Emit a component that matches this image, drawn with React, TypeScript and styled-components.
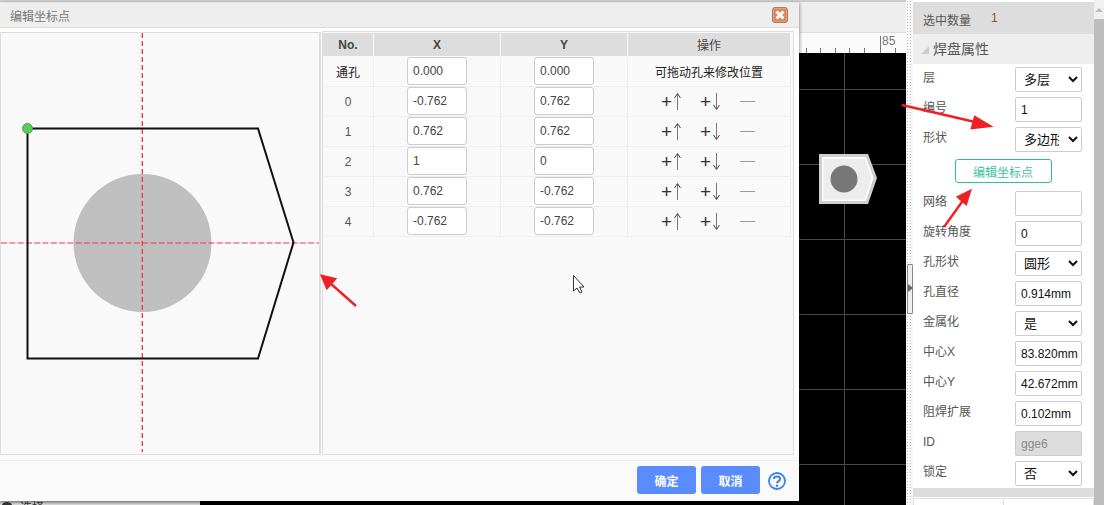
import { FC } from 'react'
import styled, { createGlobalStyle } from 'styled-components'

const GlobalStyle = createGlobalStyle`
  html, body { margin: 0; padding: 0; background: #fff; }
  body { font-family: "Liberation Sans", "Noto Sans CJK SC", sans-serif; overflow: hidden; }
  * { box-sizing: border-box; }
`

const Page = styled.div`
  position: relative;
  width: 1104px;
  height: 505px;
  display: flex;
  overflow: hidden;
  background: #fff;
`

/* editor behind the dialog */
const Editor = styled.div`
  width: 906px;
  display: flex;
  flex-direction: column;
`

const TabBar = styled.div`
  height: 33px;
  flex: none;
  background: #eee;
  border-top: 2px solid #ccc;
  border-bottom: 1px solid #ddd;
`

const Ruler = styled.div`
  height: 20px;
  flex: none;
  background: #fafafa;
  position: relative;
  color: #777;
  font-size: 12px;
`

const RulerLabel = styled.span`
  position: absolute;
  left: 882px;
  top: 1px;
`

const RulerTicks = styled.svg`
  position: absolute;
  left: 800px;
  top: 0;
`

const Board = styled.div`
  flex: 1;
  position: relative;
  background-color: #000;
  background-image:
    linear-gradient(#484848, #484848),
    repeating-linear-gradient(to bottom, transparent 0 36px, #484848 36px 37px, transparent 37px 75px);
  background-size: 1px 100%, 100% 100%;
  background-position: 844px 0, 0 0;
  background-repeat: no-repeat;
`

const PadDrawing = styled.svg`
  position: absolute;
  left: 816px;
  top: 100px;
`

const Splitter = styled.div`
  position: relative;
  width: 7px;
  flex: none;
  background-image: radial-gradient(#bbb 0.7px, transparent 0.8px);
  background-size: 3px 3px;
  background-color: #f8f8f8;
`

const SplitterHandle = styled.div`
  position: absolute;
  left: 1px;
  top: 264px;
  width: 6px;
  height: 50px;
  background: #eee;
  border: 1px solid #888;
  border-radius: 1px;
  &::after {
    content: '';
    position: absolute;
    top: 19px;
    left: 0;
    border-left: 5px solid #666;
    border-top: 4px solid transparent;
    border-bottom: 4px solid transparent;
  }
`

/* properties panel */
const Props = styled.aside`
  width: 181px;
  flex: none;
  padding-top: 2px;
  color: #555;
  font-size: 12px;
  display: flex;
  flex-direction: column;
`

const CountBar = styled.div`
  height: 32px;
  flex: none;
  background: #ddd;
  padding: 9px 0 0 10px;
  display: flex;
  gap: 20px;
  font-size: 12px;
`

const CountValue = styled.span`
  color: #7a5a20;
`

const SectionHead = styled.div`
  height: 30px;
  flex: none;
  background: #eee;
  font-size: 14px;
  line-height: 30px;
  display: flex;
  align-items: center;
  padding-left: 8px;
  gap: 4px;
`

const Caret = styled.span`
  width: 0;
  height: 0;
  margin-top: 2px;
  border-left: 8px solid transparent;
  border-bottom: 8px solid #ccc;
`

const Fields = styled.div`
  padding: 3px 12px 0 10px;
  display: flex;
  flex-direction: column;
  gap: 5px;
`

const Field = styled.label`
  height: 25px;
  display: flex;
  justify-content: space-between;
  align-items: flex-start;
`

const FieldName = styled.span`
  line-height: 23px;
`

const FieldInput = styled.input<{ $off?: boolean }>`
  width: 67px;
  height: 25px;
  border: 1px solid #ccc;
  border-radius: 2px;
  padding: 1px 0 0 5px;
  font: 12px "Liberation Sans", "Noto Sans CJK SC", sans-serif;
  color: ${p => (p.$off ? '#888' : '#111')};
  background: ${p => (p.$off ? '#ddd' : '#fff')};
  outline: none;
`

const FieldSelect = styled.select`
  width: 67px;
  height: 25px;
  border: 1px solid #ccc;
  border-radius: 2px;
  padding: 0 6px 0 4px;
  background: #fff;
  color: #111;
  font: 13px "Liberation Sans", "Noto Sans CJK SC", sans-serif;
`

const OutlineButton = styled.button`
  align-self: center;
  width: 97px;
  height: 24px;
  margin: 2px 0 3px 1px;
  padding: 0;
  background: #fff;
  border: 1px solid #2fbf9b;
  border-radius: 3px;
  color: #3cc2a0;
  font: 12px "Liberation Sans", "Noto Sans CJK SC", sans-serif;
`

const PropsFoot = styled.div`
  margin-top: 2px;
  height: 9px;
  flex: none;
  background: #ddd;
`

const FootCells = styled.div`
  flex: 1;
  margin-top: 1px;
  border-left: 1px solid #ddd;
  border-top: 1px solid #ddd;
  display: grid;
  grid-template-columns: 90px 1fr;
`

const FootCell = styled.div`
  border-right: 1px solid #ddd;
`

const ScrollBar = styled.div`
  width: 10px;
  flex: none;
  position: relative;
  background: #f1f1f1;
  padding-top: 19px;
  &::before {
    content: '';
    position: absolute;
    top: 8px;
    left: 1px;
    border-left: 4px solid transparent;
    border-right: 4px solid transparent;
    border-bottom: 4px solid #bbb;
  }
`

const ScrollThumb = styled.div`
  height: 100%;
  background: #bdbdbd;
`

/* floating dialog */
const Dialog = styled.section`
  position: absolute;
  left: 0;
  top: 2px;
  width: 799px;
  height: 499px;
  background: #fafafa;
  box-shadow: 1px 1px 3px rgba(0, 0, 0, 0.35);
  display: flex;
  flex-direction: column;
`

const DialogTitle = styled.header`
  height: 26px;
  flex: none;
  background: #eee;
  border-top: 1px solid #e4e4e4;
  border-bottom: 1px solid #ddd;
  color: #777;
  font-size: 12px;
  padding: 0 11px 0 10px;
  display: flex;
  align-items: center;
  justify-content: space-between;
`

const CloseButton = styled.span`
  width: 16px;
  height: 16px;
  border-radius: 3px;
  background: #dd8762;
  border: 1px solid #b9745a;
  box-shadow: inset 0 0 0 1px rgba(255, 255, 255, 0.2);
  display: flex;
  align-items: center;
  justify-content: center;
`

const DialogBody = styled.div`
  height: 427px;
  flex: none;
  padding-top: 3px;
  display: flex;
  background: #fff;
`

const Preview = styled.div`
  width: 321px;
  margin-top: 1px;
  flex: none;
  background: #f9f9f9;
  border: 1px solid #ddd;
  border-right: 2px solid #ddd;
`

const PointsPanel = styled.div`
  width: 472px;
  margin-left: 1px;
  background: #f9f9f9;
  border: 1px solid #ddd;
  padding: 1px 1px 1px 0;
`

const PointsGrid = styled.div`
  display: grid;
  grid-template-columns: 51px 127px 127px 163px;
  grid-auto-rows: 30px;
  grid-template-rows: 24px;
`

const HeadCell = styled.div<{ $plain?: boolean }>`
  background: #ddd;
  border-right: 1px solid #f9f9f9;
  border-bottom: 1px solid #f9f9f9;
  color: #444;
  font-size: 12px;
  font-weight: ${p => (p.$plain ? 'normal' : 'bold')};
  display: flex;
  align-items: center;
  justify-content: center;
`

const Cell = styled.div<{ $strong?: boolean }>`
  border-right: 1px solid #eee;
  border-bottom: 1px solid #eee;
  color: ${p => (p.$strong ? '#222' : '#555')};
  font-size: 12px;
  display: flex;
  align-items: center;
  justify-content: center;
`

const PointInput = styled.input`
  width: 60px;
  height: 28px;
  margin-top: -1px;
  border: 1px solid #ccc;
  border-radius: 3px;
  padding: 0 5px;
  background: #fff;
  color: #444;
  font: 12px "Liberation Sans", sans-serif;
  outline: none;
`

const Actions = styled.div`
  width: 100%;
  padding-left: 33px;
  display: flex;
  align-items: center;
`

const ActionButton = styled.span`
  width: 39px;
  display: flex;
  align-items: center;
  gap: 2px;
  color: #333;
  font: 19px/20px "Liberation Sans", sans-serif;
`

const ActionArrow = styled.svg`
  flex: none;
`

const RemoveButton = styled.span`
  margin: -4px 0 0 1px;
  color: #999;
  font: 15px/20px "Liberation Sans", sans-serif;
`

const DialogFoot = styled.footer`
  flex: 1;
  margin-top: 5px;
  border-top: 1px solid #eee;
  padding: 5px 13px 0 0;
  display: flex;
  justify-content: flex-end;
  align-items: flex-start;
  gap: 5px;
`

const PrimaryButton = styled.button`
  width: 59px;
  height: 28px;
  padding: 0;
  border: none;
  border-radius: 3px;
  background: #5a8cff;
  color: #fff;
  font: bold 12px "Liberation Sans", "Noto Sans CJK SC", sans-serif;
`

const HelpIcon = styled.svg`
  margin: 6px 0 0 3px;
`

const UnderBar = styled.div`
  position: absolute;
  left: 0;
  top: 501px;
  width: 200px;
  height: 4px;
  background: linear-gradient(#aaa, #ddd);
  overflow: hidden;
  color: #333;
  font-size: 12px;
  line-height: 14px;
  padding-left: 20px;
`

const UnderIcon = styled.svg`
  position: absolute;
  left: 1px;
  top: 0;
`

const Overlay = styled.svg`
  position: absolute;
  left: 0;
  top: 0;
  pointer-events: none;
`

interface IPoint {
  no: string
  x: string
  y: string
}

const points: IPoint[] = [
  { no: '0', x: '-0.762', y: '0.762' },
  { no: '1', x: '0.762', y: '0.762' },
  { no: '2', x: '1', y: '0' },
  { no: '3', x: '0.762', y: '-0.762' },
  { no: '4', x: '-0.762', y: '-0.762' }
]

const UpArrow: FC = () => (
  <ActionArrow width="7" height="17" viewBox="0 0 7 17">
    <path d="M3.5 1V17" stroke="#777" fill="none" />
    <path d="M0.5 5L3.5 0.5L6.5 5" stroke="#444" fill="none" />
  </ActionArrow>
)

const DownArrow: FC = () => (
  <ActionArrow width="7" height="17" viewBox="0 0 7 17">
    <path d="M3.5 0V16" stroke="#777" fill="none" />
    <path d="M0.5 12L3.5 16.5L6.5 12" stroke="#444" fill="none" />
  </ActionArrow>
)

const PointRow: FC<IPoint> = ({ no, x, y }) => (
  <>
    <Cell>{no}</Cell>
    <Cell>
      <PointInput value={x} readOnly />
    </Cell>
    <Cell>
      <PointInput value={y} readOnly />
    </Cell>
    <Cell>
      <Actions>
        <ActionButton>
          +<UpArrow />
        </ActionButton>
        <ActionButton>
          +<DownArrow />
        </ActionButton>
        <RemoveButton>—</RemoveButton>
      </Actions>
    </Cell>
  </>
)

const InputField: FC<{ name: string; value: string; off?: boolean }> = ({ name, value, off }) => (
  <Field>
    <FieldName>{name}</FieldName>
    <FieldInput value={value} readOnly $off={off} />
  </Field>
)

const SelectField: FC<{ name: string; value: string }> = ({ name, value }) => (
  <Field>
    <FieldName>{name}</FieldName>
    <FieldSelect value={value} onChange={() => undefined}>
      <option>{value}</option>
    </FieldSelect>
  </Field>
)

const App: FC = () => {
  return (
    <Page>
      <GlobalStyle />
      <Editor>
        <TabBar />
        <Ruler>
          <RulerTicks width="106" height="20" viewBox="0 0 106 20">
            <path
              d="M6.5 15V20M20.5 15V20M35.5 15V20M49.5 15V20M64.5 15V20M80.5 3V20M95.5 15V20"
              stroke="#777"
              fill="none"
            />
          </RulerTicks>
          <RulerLabel>85</RulerLabel>
        </Ruler>
        <Board>
          <PadDrawing width="64" height="56" viewBox="0 0 64 56">
            <polygon points="3,1 52,1 61,25 52,51 3,51" fill="#cfcfcf" />
            <polygon points="6,4 50,4 57.5,25 50,48 6,48" fill="#fff" />
            <polygon points="7.5,5.5 49,5.5 55.5,25 49,46.5 7.5,46.5" fill="#ececec" />
            <circle cx="28" cy="26" r="13.5" fill="#777" />
          </PadDrawing>
        </Board>
      </Editor>
      <Splitter>
        <SplitterHandle />
      </Splitter>
      <Props>
        <CountBar>
          <span>选中数量</span>
          <CountValue>1</CountValue>
        </CountBar>
        <SectionHead>
          <Caret />
          焊盘属性
        </SectionHead>
        <Fields>
          <SelectField name="层" value="多层" />
          <InputField name="编号" value="1" />
          <SelectField name="形状" value="多边形" />
          <OutlineButton>编辑坐标点</OutlineButton>
          <InputField name="网络" value="" />
          <InputField name="旋转角度" value="0" />
          <SelectField name="孔形状" value="圆形" />
          <InputField name="孔直径" value="0.914mm" />
          <SelectField name="金属化" value="是" />
          <InputField name="中心X" value="83.820mm" />
          <InputField name="中心Y" value="42.672mm" />
          <InputField name="阻焊扩展" value="0.102mm" />
          <InputField name="ID" value="gge6" off />
          <SelectField name="锁定" value="否" />
        </Fields>
        <PropsFoot />
        <FootCells>
          <FootCell />
          <FootCell />
        </FootCells>
      </Props>
      <ScrollBar>
        <ScrollThumb />
      </ScrollBar>

      <UnderBar>
        <UnderIcon width="12" height="4" viewBox="0 0 12 4">
          <ellipse cx="6" cy="4" rx="5" ry="3" fill="#333" />
        </UnderIcon>
        选择
      </UnderBar>

      <Dialog>
        <DialogTitle>
          <span>编辑坐标点</span>
          <CloseButton>
            <svg width="10" height="10" viewBox="0 0 10 10">
              <path d="M1.5 1.5L8.5 8.5M8.5 1.5L1.5 8.5" stroke="#fff" strokeWidth="3" />
            </svg>
          </CloseButton>
        </DialogTitle>
        <DialogBody>
          <Preview>
            <svg width="318" height="419" viewBox="0 0 318 419">
              <circle cx="141.5" cy="210" r="69" fill="#bfbfbf" />
              <path d="M141.3 0V419" stroke="#ff3040" strokeWidth="1.3" strokeDasharray="5 3" fill="none" />
              <path d="M0 210H318" stroke="#ff3040" strokeDasharray="6 2.3" fill="none" />
              <polygon
                points="26.5,95.5 257,95.5 292.5,209.5 257,325.5 26.5,325.5"
                fill="none"
                stroke="#111"
                strokeWidth="2"
              />
              <circle cx="26.5" cy="95.5" r="5" fill="#5ccb5c" stroke="#47a847" />
            </svg>
          </Preview>
          <PointsPanel>
            <PointsGrid>
              <HeadCell>No.</HeadCell>
              <HeadCell>X</HeadCell>
              <HeadCell>Y</HeadCell>
              <HeadCell $plain>操作</HeadCell>
              <Cell $strong>通孔</Cell>
              <Cell>
                <PointInput value="0.000" readOnly />
              </Cell>
              <Cell>
                <PointInput value="0.000" readOnly />
              </Cell>
              <Cell $strong>可拖动孔来修改位置</Cell>
              {points.map(point => (
                <PointRow key={point.no} {...point} />
              ))}
            </PointsGrid>
          </PointsPanel>
        </DialogBody>
        <DialogFoot>
          <PrimaryButton>确定</PrimaryButton>
          <PrimaryButton>取消</PrimaryButton>
          <HelpIcon width="18" height="18" viewBox="0 0 18 18">
            <circle cx="9" cy="9" r="8" fill="none" stroke="#3b82e6" strokeWidth="1.8" />
            <path d="M5.9 7C5.9 3.8 12.1 3.8 12.1 7C12.1 9.2 9 9 9 11.3" fill="none" stroke="#3b82e6" strokeWidth="2" />
            <circle cx="9" cy="13.7" r="1.2" fill="#3b82e6" />
          </HelpIcon>
        </DialogFoot>
      </Dialog>

      <Overlay width="1104" height="505" viewBox="0 0 1104 505">
        <g stroke="#ee2026" strokeWidth="2.4" fill="#ee2026">
          <path d="M902 105L975 122" />
          <path d="M990 126L975 117L972 128Z" />
          <path d="M944 227L964 199" />
          <path d="M970 191L958 197L966 204Z" />
          <path d="M356 306L330 283" />
          <path d="M322 276L327 288L335 279Z" />
        </g>
        <path d="M573.5 275.5V291L577 288L580 293L582 292L579.5 287H584Z" fill="#fff" stroke="#333" />
      </Overlay>
    </Page>
  )
}

export default App
